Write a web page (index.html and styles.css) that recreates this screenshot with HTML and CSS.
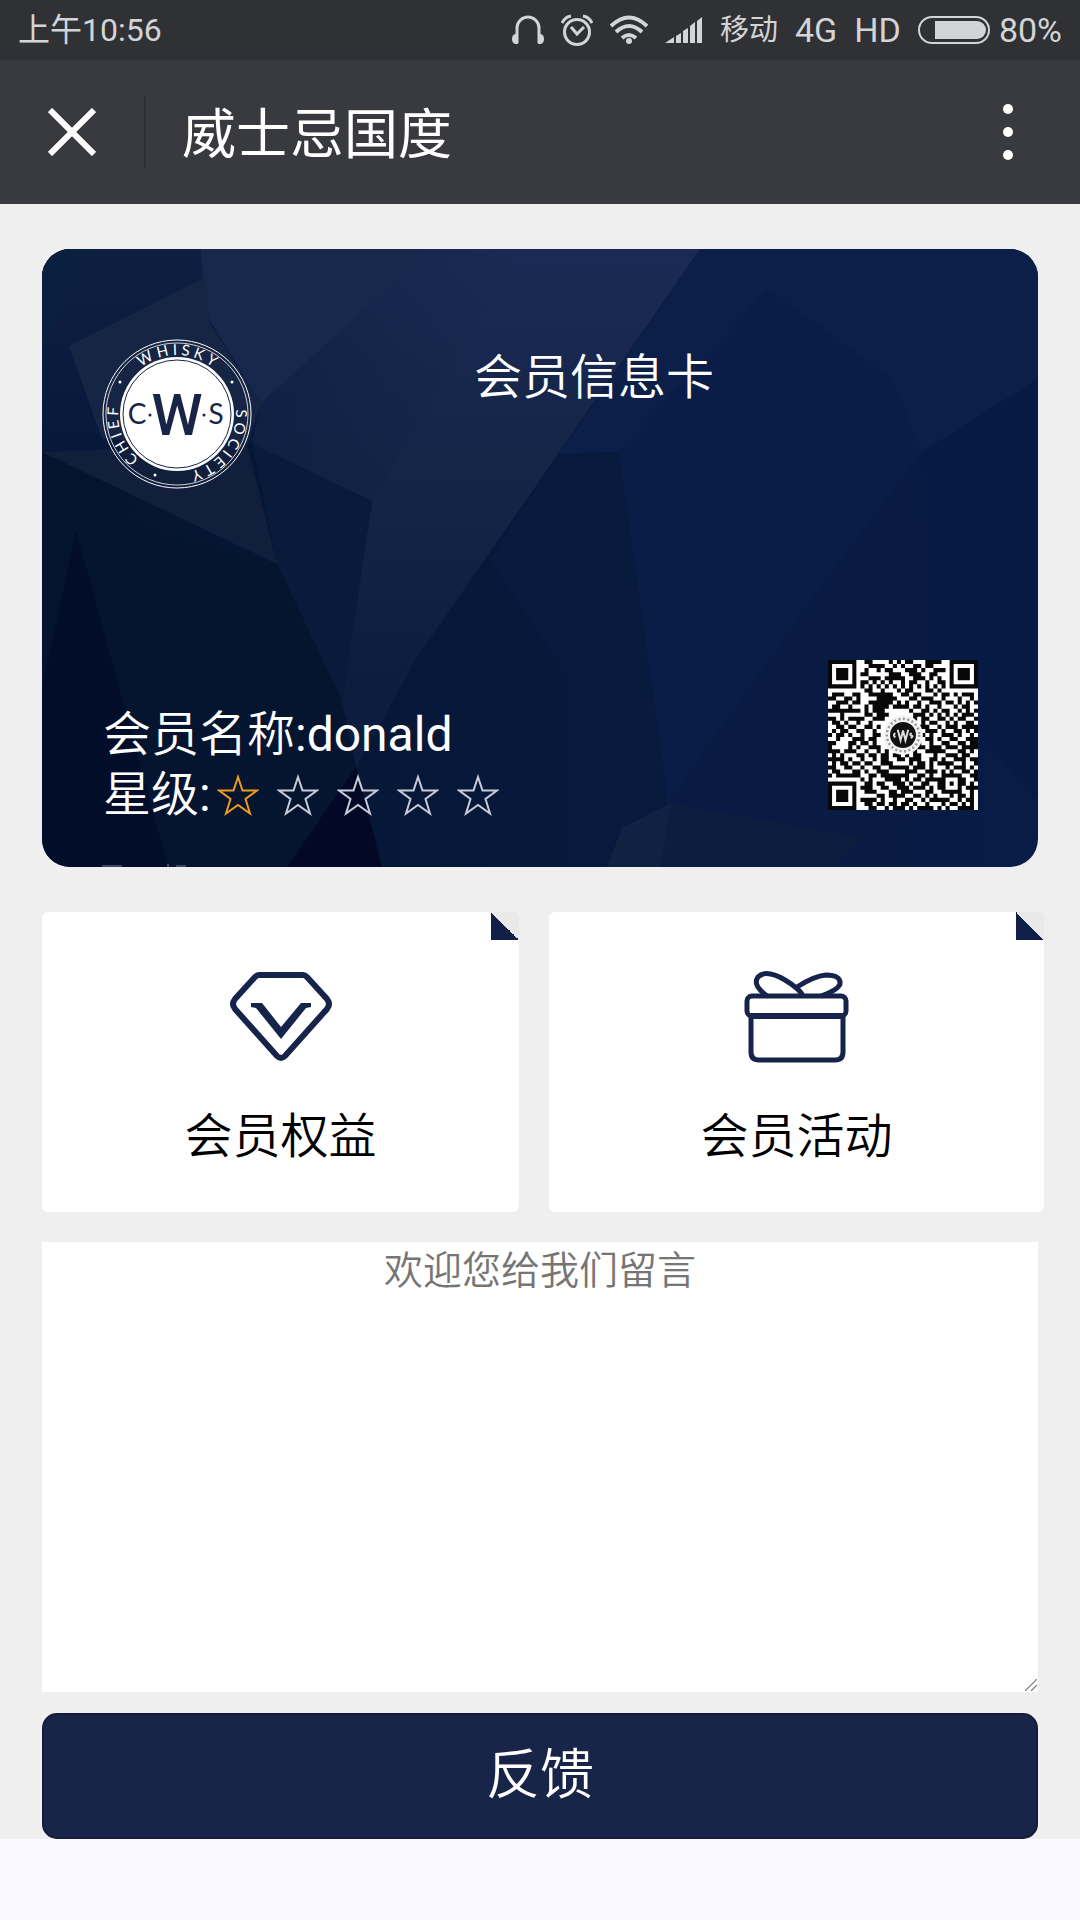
FILE: index.html
```html
<!DOCTYPE html>
<html lang="zh-CN">
<head>
    <meta charset="UTF-8">
    <meta name="viewport" content="width=device-width, initial-scale=1.0">
    <title>威士忌国度</title>
    <link rel="stylesheet" href="styles.css">
</head>

<body>

    <div class="status-bar">
        <span class="time">上午10:56</span>
        <div class="status-icons">
            <svg class="headphone" width="32" height="30" viewBox="0 0 32 30">
                <path d="M5 28V13a11 11 0 0 1 22 0v15" fill="none" stroke="currentColor" stroke-width="3"/>
                <path d="M6 19v10H3q-3-1-3-5t3-5zM26 19v10h3q3-1 3-5t-3-5z" fill="currentColor"/>
            </svg>
            <svg class="alarm" width="32" height="32" viewBox="0 0 32 32" fill="none" stroke="currentColor" stroke-width="3">
                <circle cx="16" cy="18" r="12.5"/>
                <path d="M10 13l6 7 7-7M1 9q3-6 9-7M31 9q-3-6-9-7"/>
            </svg>
            <svg class="wifi" width="38" height="30" viewBox="0 0 38 30" fill="none" stroke="currentColor" stroke-width="4">
                <path d="M1 11q18-17 36 0M6 17q13-12 26 0M12 23q7-6 14 0"/>
                <circle cx="19" cy="26" r="3" fill="currentColor" stroke="none"/>
            </svg>
            <svg class="signal" width="38" height="26" viewBox="0 0 38 26" fill="currentColor">
                <path d="M0 26l9-6v6zM11 19l5-3v10h-5zM18 14l5-3v15h-5zM25 9l5-4v21h-5zM32 4l5-4v26h-5z"/>
            </svg>
            <span class="carrier">移动</span>
            <span class="network">4G</span>
            <span class="network">HD</span>
            <svg class="battery" width="72" height="28" viewBox="0 0 72 28">
                <rect x="1" y="1" width="70" height="26" rx="13" fill="none" stroke="currentColor" stroke-width="2"/>
                <path d="M17 5h42a9 9 0 0 1 0 18H17z" fill="currentColor"/>
            </svg>
            <span class="network">80%</span>
        </div>
    </div>

    <header class="nav-bar">
        <button class="close" type="button" aria-label="关闭">
            <svg width="48" height="48" viewBox="0 0 48 48">
                <path d="M2 2l44 44M46 2L2 46" stroke="currentColor" stroke-width="6"/>
            </svg>
        </button>
        <h1>威士忌国度</h1>
        <button class="more" type="button" aria-label="更多">
            <svg width="10" height="58" viewBox="0 0 10 58" fill="currentColor">
                <circle cx="5" cy="6" r="5"/>
                <circle cx="5" cy="29" r="5"/>
                <circle cx="5" cy="52" r="5"/>
            </svg>
        </button>
    </header>

    <main class="page">

        <!-- Member card -->
        <section class="card">
            <svg class="card-bg" viewBox="0 0 996 618" preserveAspectRatio="none" aria-hidden="true">
                <defs>
                    <linearGradient id="base" x1="0" y1="0" x2="1" y2="0">
                        <stop offset="0" stop-color="#04142f"/>
                        <stop offset=".5" stop-color="#07193b"/>
                        <stop offset="1" stop-color="#071c47"/>
                    </linearGradient>
                    <linearGradient id="band" x1="0" y1="0" x2="0" y2="1">
                        <stop offset="0" stop-color="#1a2a54"/>
                        <stop offset=".5" stop-color="#142445"/>
                        <stop offset="1" stop-color="#08193a"/>
                    </linearGradient>
                    <linearGradient id="left" x1="0" y1="0" x2="0" y2="1">
                        <stop offset="0" stop-color="#0e1f41"/>
                        <stop offset="1" stop-color="#07183a"/>
                    </linearGradient>
                    <linearGradient id="fade" x1="0" y1="0" x2="1" y2="0">
                        <stop offset="0" stop-color="#0b1c3f"/>
                        <stop offset="1" stop-color="#132345" stop-opacity="0"/>
                    </linearGradient>
                </defs>
                <rect width="996" height="618" fill="url(#base)"/>
                <path d="M0 0h159l60 154-9 41L0 203z" fill="url(#left)"/>
                <path d="M0 0h50L0 100z" fill="#0b1f3f"/>
                <path d="M159 0h499L353 440l-39 78-14-66 30-200-120-57 9-41-55-89z" fill="url(#band)"/>
                <path d="M210 195l120 57-30 200-65-137z" fill="#091a3a"/>
                <path d="M159 0h230L219 154l-55-89z" fill="#18284c"/>
                <path d="M389 0L219 154l-9 41 120 57L480 0z" fill="url(#fade)" opacity=".6"/>
                <path d="M27 97l137-69 3 45 52 81-14 41-145-5z" fill="#172544"/>
                <path d="M0 203l205-8 30 120z" fill="#111f3c"/>
                <path d="M0 250l235 65 65 137 14 66-69 100H126L34 281z" fill="#051530"/>
                <path d="M34 281L0 440v178h126z" fill="#020e29"/>
                <path d="M314 518l-69 100h95z" fill="#020826"/>
                <path d="M300 452l70-34-56 100z" fill="#0d1d3f"/>
                <path d="M658 0h338v130l-116 73H577l-57 2z" fill="#0b1f48"/>
                <path d="M658 0h68v40L577 203l-60 2z" fill="#0c1f48"/>
                <path d="M726 40l125 90 29 73H577z" fill="#0a1d48"/>
                <path d="M517 205l60-2 49 351-118-154-60-90z" fill="#081a3e"/>
                <path d="M577 203h303l10 237-264 114z" fill="#0a1d46"/>
                <path d="M770 350l110-147 10 237-30 178H626v-64z" fill="#091b42"/>
                <path d="M880 203l116-73v420l-106-110z" fill="#071a46"/>
                <path d="M629 554l192 35-30 29H565l15-39z" fill="#0c1d40"/>
                <path d="M629 554l-10 64h-54l15-39z" fill="#112142"/>
                <path d="M60 616h20v2H60zM125 615h2v3h-2zM134 616h10v2h-10z" fill="#3b4a68"/>
            </svg>

            <svg class="logo" width="150" height="150" viewBox="0 0 150 150">
                <defs>
                    <path id="ring" d="M75 134a59 59 0 0 1 0-118a59 59 0 0 1 0 118"/>
                </defs>
                <g fill="none" stroke="#fff">
                    <circle cx="75" cy="75" r="74"/>
                    <circle cx="75" cy="75" r="71" stroke-width=".8"/>
                </g>
                <circle cx="75" cy="75" r="57" fill="#fff"/>
                <circle cx="75" cy="75" r="54" fill="none" stroke="#182548"/>
                <g class="ring-text">
                    <text><textPath href="#ring" startOffset="19%">C H I E F</textPath></text>
                    <text><textPath href="#ring" startOffset="50%">W H I S K Y</textPath></text>
                    <text><textPath href="#ring" startOffset="85%">S O C I E T Y</textPath></text>
                </g>
                <g fill="#fff">
                    <circle cx="18" cy="43" r="1.5"/>
                    <circle cx="130" cy="43" r="1.5"/>
                    <circle cx="53" cy="136" r="1.5"/>
                </g>
                <g class="initials">
                    <text x="35" y="85">C</text>
                    <text class="big" x="75" y="96">W</text>
                    <text x="114" y="85">S</text>
                </g>
                <circle cx="48" cy="76" r="1.5" fill="#182548"/>
                <circle cx="102" cy="76" r="1.5" fill="#182548"/>
            </svg>

            <h2>会员信息卡</h2>

            <div class="member">
                <p>会员名称<span class="name">:donald</span></p>
                <div class="level">
                    <span>星级<span class="name">:</span></span>
                    <div class="stars" role="img" aria-label="1 / 5">
                        <svg class="star on" viewBox="0 0 42 42"><path d="M21 3l4.500 13.500H40L28.500 25 33 39.500 21 31 9 39.500 13.500 25 2 16.500h14.500z"/></svg>
                        <svg class="star" viewBox="0 0 42 42"><path d="M21 3l4.500 13.500H40L28.500 25 33 39.500 21 31 9 39.500 13.500 25 2 16.500h14.500z"/></svg>
                        <svg class="star" viewBox="0 0 42 42"><path d="M21 3l4.500 13.500H40L28.500 25 33 39.500 21 31 9 39.500 13.500 25 2 16.500h14.500z"/></svg>
                        <svg class="star" viewBox="0 0 42 42"><path d="M21 3l4.500 13.500H40L28.500 25 33 39.500 21 31 9 39.500 13.500 25 2 16.500h14.500z"/></svg>
                        <svg class="star" viewBox="0 0 42 42"><path d="M21 3l4.500 13.500H40L28.500 25 33 39.500 21 31 9 39.500 13.500 25 2 16.500h14.500z"/></svg>
                    </div>
                </div>
            </div>

            <svg class="qr" width="150" height="150" viewBox="0 0 37 37" role="img" aria-label="二维码">
                <rect width="37" height="37" fill="#fff"/>
                <path id="qr-modules" fill="#080808"/>
                <circle cx="18.500" cy="18.500" r="4.900" fill="#f4f4f4"/>
                <circle cx="18.500" cy="18.500" r="4" fill="none" stroke="#999" stroke-width=".6" stroke-dasharray=".5 .6"/>
                <circle cx="18.500" cy="18.500" r="3.200" fill="#111"/>
                <path d="M17.200 17.200l.7 2.600.6-2.400.6 2.400.7-2.600M16.600 18q-.7.500 0 1.100M20.600 18q-.6.400 0 .6t-.2.600" fill="none" stroke="#ddd" stroke-width=".5"/>
            </svg>
        </section>

        <nav class="tiles">
            <a class="tile" href="#rights">
                <svg width="106" height="92" viewBox="0 0 106 92">
                    <path d="M31 4h44q2 0 4 2l20 22q4 5 0 10L57 85q-4 4-8 0L7 38q-4-5 0-10L27 6q2-2 4-2z" fill="none" stroke="#16234a" stroke-width="6"/>
                    <path d="M23 32h11l19 24 20-24h10v4l-5 1-25 31-25-31-5-1z" fill="#16234a"/>
                </svg>
                <span>会员权益</span>
            </a>
            <a class="tile" href="#events">
                <svg width="106" height="92" viewBox="0 0 106 92" fill="none" stroke="#16234a" stroke-width="5">
                    <rect x="3" y="25" width="99" height="20" rx="5"/>
                    <path d="M7 45v36q0 8 8 8h76q8 0 8-8V45"/>
                    <path d="M5 45h95" stroke-width="6"/>
                    <path d="M23 25Q8 14 14 6 22-2 41 9q15 9 18 16M53 16Q70 5 82 4q15 0 14 9-2 6-19 12"/>
                </svg>
                <span>会员活动</span>
            </a>
        </nav>

        <!-- Feedback -->
        <form class="feedback">
            <div class="message">
                <textarea placeholder="欢迎您给我们留言" aria-label="留言"></textarea>
                <svg class="grip" width="12" height="12" viewBox="0 0 12 12">
                    <path d="M0 12L12 0M6 12l6-6" stroke="#777" stroke-width="1.200"/>
                </svg>
            </div>
            <button class="submit" type="button">反馈</button>
        </form>

    </main>

    <script src="script.js"></script>
</body>
</html>
```

FILE: styles.css
```css
* {
    box-sizing: border-box;
}

body {
    margin: 0;
    background-color: #faf9ff;
    font-family: Roboto, "Noto Sans CJK SC", sans-serif;
    font-weight: 350;
}

h1, h2, p {
    margin: 0;
    font-weight: 350;
}

svg {
    display: block;
    flex: none;
}

button {
    border: 0;
    padding: 0;
    background: none;
    color: inherit;
    font: inherit;
}

/* Phone status bar */
.status-bar {
    display: flex;
    justify-content: space-between;
    align-items: center;
    height: 60px;
    padding: 0 18px;
    background-color: #303134;
    color: #d3d4d5;
    font-size: 32px;
    font-weight: 400;
    line-height: 36px;
}
.status-icons {
    display: flex;
    align-items: center;
    gap: 17px;
}
.status-icons .battery {
    margin-right: -8px;
}
.carrier {
    font-size: 29px;
}
.network {
    font-size: 34px;
}

/* Title bar */
.nav-bar {
    display: flex;
    align-items: center;
    height: 144px;
    background-color: #393a3f;
    color: #fff;
}
.close {
    display: flex;
    align-items: center;
    justify-content: center;
    width: 146px;
    height: 72px;
    border-right: 2px solid #2e2f33;
}
.nav-bar h1 {
    flex: 1;
    padding: 0 0 4px 36px;
    font-size: 54px;
    font-weight: 400;
}
.more {
    padding: 0 67px;
}

.page {
    padding: 45px 42px 0;
    background-color: #efefef;
}

/* Member card */
.card {
    display: grid;
    grid-template-columns: 150px 1fr 150px;
    grid-template-rows: 150px 1fr;
    position: relative;
    min-height: 618px;
    padding: 90px 60px 42px;
    border-radius: 28px;
    overflow: hidden;
    color: #fff;
    font-size: 48px;
    line-height: 60px;
}
.card-bg {
    position: absolute;
    inset: 0;
    width: 100%;
    height: 100%;
}
.card > :not(.card-bg) {
    z-index: 1;
}
.card h2 {
    grid-column: 2 / 4;
    padding: 9px 0 0 222px;
    font-size: 48px;
}
.ring-text {
    fill: #fff;
    font: 15px Lato, sans-serif;
    text-anchor: middle;
}
.initials {
    fill: #182548;
    font: 28px Lato, sans-serif;
    text-anchor: middle;
}
.initials .big {
    font: 500 58px Roboto, sans-serif;
}
.member {
    grid-column: 1 / 3;
    align-self: end;
    padding-left: 1px;
}
.name {
    font-weight: 400;
}
.level {
    display: flex;
    align-items: center;
}
.stars {
    display: flex;
    gap: 18px;
    margin-left: 6px;
}
.star {
    width: 42px;
    height: 42px;
    fill: none;
    stroke: #c9cbd9;
    stroke-width: 2;
}
.star.on {
    stroke: #ee9a1c;
}
.qr {
    align-self: end;
    margin-bottom: 15px;
}

/* Links below the card */
.tiles {
    display: grid;
    grid-template-columns: 477fr 495fr;
    gap: 30px;
    margin: 45px -6px 30px 0;
}
.tile {
    display: flex;
    flex-direction: column;
    align-items: center;
    gap: 44px;
    height: 300px;
    padding-top: 59px;
    border-radius: 6px;
    background: linear-gradient(45deg, #122047 50%, #e9e9ea 50%) top right / 28px 28px no-repeat #fff;
    color: #000;
    font-size: 48px;
    line-height: 60px;
    text-decoration: none;
}

/* Feedback form */
.message {
    position: relative;
}
textarea {
    display: block;
    width: 100%;
    height: 450px;
    padding: 3px;
    border: 0;
    border-radius: 0;
    background-color: #fff;
    color: #000;
    font: inherit;
    font-size: 39px;
    line-height: 52px;
    text-align: center;
    resize: none;
}
textarea::placeholder {
    color: #757575;
}
.grip {
    position: absolute;
    right: 1px;
    bottom: 1px;
}
.submit {
    display: block;
    width: 100%;
    height: 126px;
    margin-top: 21px;
    padding-bottom: 12px;
    border: 2px solid #141b3b;
    border-radius: 15px;
    background-color: #182548;
    color: #fff;
    font-size: 54px;
}
```

FILE: script.js
```js
// QR modules, one string per row
const rows = [
    '1111111001100001010110001111001111111',
    '1000001000111100101001101100001000001',
    '1011101001001011000111010011101011101',
    '1011101011000001110011100110001011101',
    '1011101000111011111001110101001011101',
    '1000001011010101001011001001101000001',
    '1111111010101010101010101010101111111',
    '0000000001100100010110001101000000000',
    '0111001100111111001101100010110101110',
    '1100110100001111100011011100100010010',
    '0011101100111111010100100111011010101',
    '0110010001011110111101101001000101100',
    '1111111101011100000010011010110010101',
    '0001000001101110000001110101010101110',
    '1101011110011100000001011001101011001',
    '0110100100100000000000010110010100110',
    '0011011001101000000000111001011101111',
    '0101100110010000000000001110100110101',
    '1011010010011000000000110100111010010',
    '0010001110110000000000101101001100111',
    '1100011011010000000001100100110011011',
    '1000010100111000000000110111011101111',
    '1110111001001010000101001111100011010',
    '0101000110110110110101100010011101100',
    '1111010010010110011011100110100111011',
    '0101101101100111000010110101111001001',
    '1100110010011001111101110100010111010',
    '0110001101001110000111001110101001101',
    '1011111100110111111100110100111110011',
    '0000000010100011110101101111100011001',
    '1111111001101100111010011001101011010',
    '1000001011100110011101110101100010111',
    '1011101001110001101110001100111110010',
    '1011101000001101111001101010001011010',
    '1011101011110100100110010111110010110',
    '1000001001101101101101001000101101010',
    '1111111000110010111010111101010011110'
];

let d = '';
rows.forEach((row, y) => {
    [...row].forEach((cell, x) => {
        if (cell === '1') d += `M${x} ${y}h1v1h-1z`;
    });
});
document.getElementById('qr-modules').setAttribute('d', d);
```
